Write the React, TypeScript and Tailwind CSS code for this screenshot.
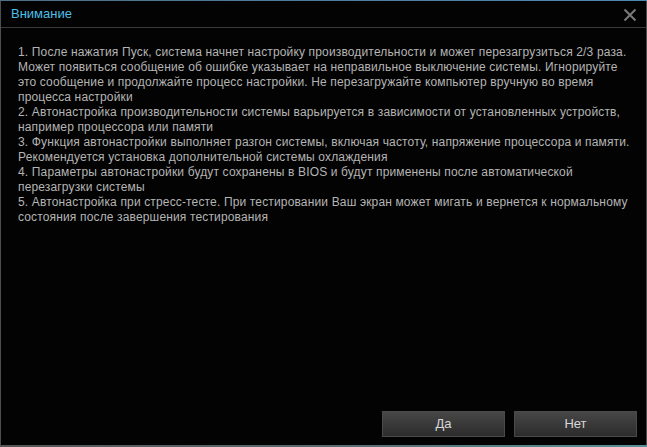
const lines = [
  "1. После нажатия Пуск, система начнет настройку производительности и может перезагрузиться 2/3 раза.",
  "Может появиться сообщение об ошибке указывает на неправильное выключение системы. Игнорируйте",
  "это сообщение и продолжайте процесс настройки. Не перезагружайте компьютер вручную во время",
  "процесса настройки",
  "2. Автонастройка производительности системы варьируется в зависимости от установленных устройств,",
  "например процессора или памяти",
  "3. Функция автонастройки выполняет разгон системы, включая частоту, напряжение процессора и памяти.",
  "Рекомендуется установка дополнительной системы охлаждения",
  "4. Параметры автонастройки будут сохранены в BIOS и будут применены после автоматической",
  "перезагрузки системы",
  "5. Автонастройка при стресс-тесте. При тестировании Ваш экран может мигать и вернется к нормальному",
  "состояния после завершения тестирования",
];

function DialogButton({ label }: { label: string }) {
  return (
    <button className="h-[26px] w-[123px] border border-[#4a4a4a] bg-gradient-to-b from-[#474747] to-[#2c2c2c] text-[13px] text-[#d8d8d8]">
      {label}
    </button>
  );
}

export default function App() {
  return (
    <div
      className="flex h-[447px] w-[647px] flex-col bg-[#030303]"
      style={{ fontFamily: '"Liberation Sans", Arial, sans-serif' }}
    >
      <div className="h-px bg-gradient-to-r from-[#4f6f85] to-[#4d89b3]" />
      <div className="flex flex-1 flex-col border-x border-[#4e4e4e]">
        <div className="flex h-[27px] items-center justify-between border-b border-[#3a3a3a] pl-[10px] pr-[9px]">
          <span className="text-[13px] text-[#4ebfe6]">Внимание</span>
          <svg width="14" height="14" viewBox="0 0 14 14" className="mt-px">
            <path d="M1.5 1.5L12.5 12.5M12.5 1.5L1.5 12.5" stroke="#7a7a7a" strokeWidth="2" />
          </svg>
        </div>
        <div className="flex-1 pl-[17px] pt-[17px] text-[12px] leading-[15px] tracking-[0.15px] text-[#b4b4b4]">
          {lines.map((l) => (
            <div key={l} className="whitespace-nowrap">
              {l}
            </div>
          ))}
        </div>
        <div className="flex justify-end gap-[9px] pb-[8px] pr-[9px]">
          <DialogButton label="Да" />
          <DialogButton label="Нет" />
        </div>
      </div>
      <div className="h-[2px] bg-gradient-to-r from-[#555555] via-[#566b70] to-[#5a8f99]" />
    </div>
  );
}
